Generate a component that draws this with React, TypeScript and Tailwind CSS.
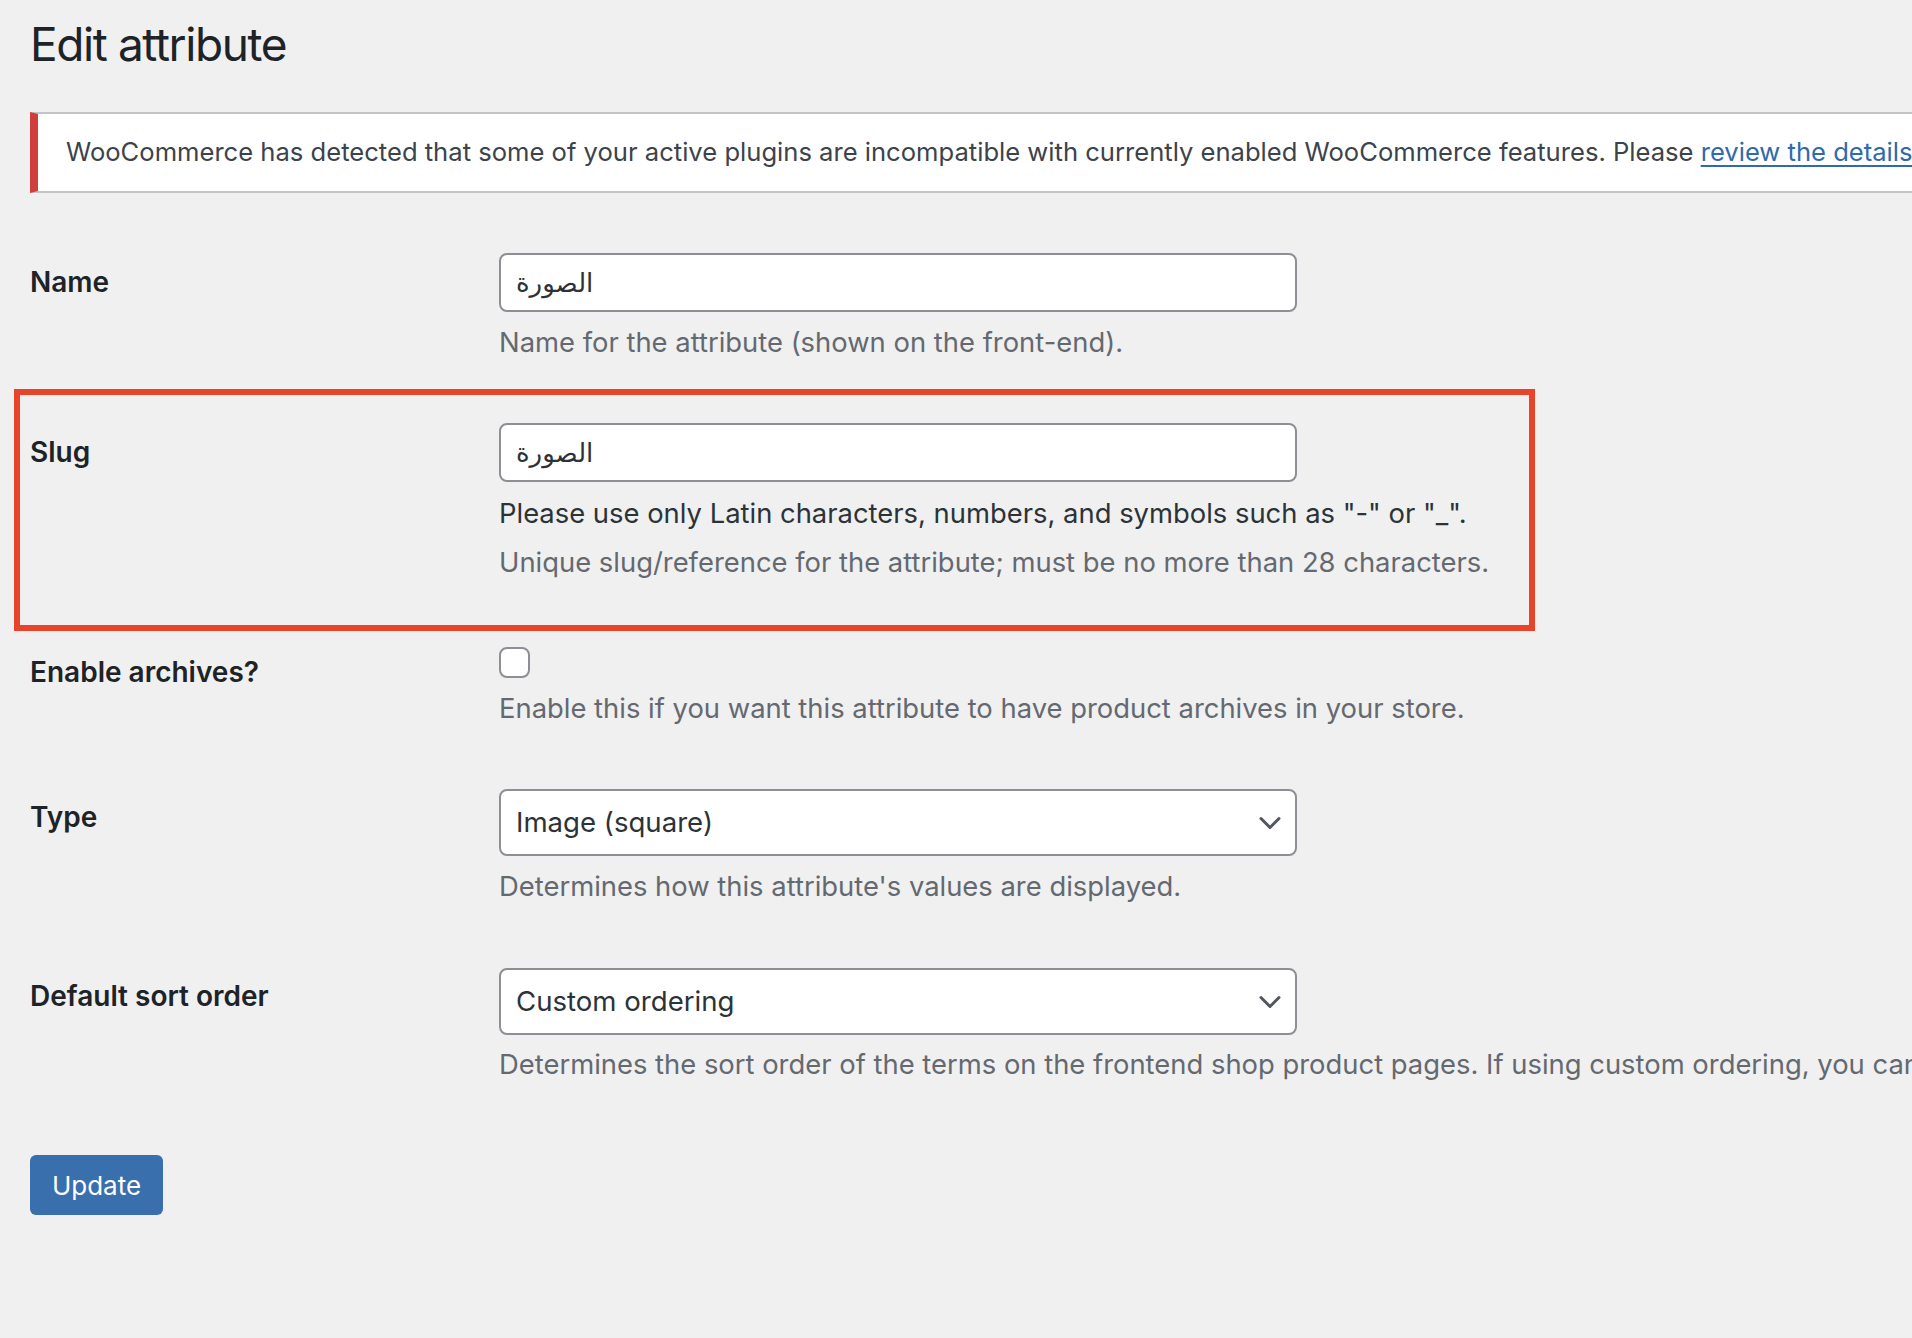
import React from 'react';

const Chevron = () => (
  <svg width="22" height="14" viewBox="0 0 22 14" fill="none">
    <path d="M2 2.5 L11 11.5 L20 2.5" stroke="#50575e" strokeWidth="3" strokeLinecap="round" strokeLinejoin="round" />
  </svg>
);

const App = () => {
  return (
    <div className="w-[1912px] h-[1338px] overflow-hidden bg-[#f0f0f1] pl-[30px] font-[family-name:Inter,'DejaVu_Sans',sans-serif] text-[#1d2327]">
      <h1 className="pt-[16px] text-[46px] leading-[56px] font-normal tracking-[-1.4px]">Edit attribute</h1>

      {/* Incompatible plugins notice */}
      <div className="mt-[40px] w-[2200px] bg-white border-2 border-l-8 border-[#c3c4c7] border-l-[#cf3f3d] pt-[20px] pb-[21px] pl-[28px]">
        <p className="text-[25.6px] leading-[36px] text-[#3c434a] whitespace-nowrap">
          WooCommerce has detected that some of your active plugins are incompatible with currently enabled WooCommerce features. Please{' '}
          <a href="#" className="text-[#2f6bab] underline underline-offset-[4px]">review the details</a>
        </p>
      </div>

      {/* Name */}
      <div className="mt-[60px] flex">
        <div className="w-[469px] shrink-0 pt-[9px] text-[28px] leading-[40px] font-semibold">Name</div>
        <div>
          <div className="w-[798px] h-[59px] bg-white border-2 border-[#8c8f94] rounded-[8px] flex items-center pl-[15px] text-[26px] text-[#2c3338]">
            الصورة
          </div>
          <p className="mt-[10px] text-[27.4px] leading-[40px] text-[#646970] whitespace-nowrap">
            Name for the attribute (shown on the front-end).
          </p>
        </div>
      </div>

      {/* Slug, highlighted */}
      <div className="mt-[27px] -ml-[16px] w-[1521px] border-[6px] border-[#e8432b] pl-[10px] pt-[28px] pb-[43px]">
        <div className="flex">
          <div className="w-[469px] shrink-0 pt-[9px] text-[28px] leading-[40px] font-semibold">Slug</div>
          <div>
            <div className="w-[798px] h-[59px] bg-white border-2 border-[#8c8f94] rounded-[8px] flex items-center pl-[15px] text-[26px] text-[#2c3338]">
              الصورة
            </div>
            <p className="mt-[11px] text-[27.4px] leading-[40px] text-[#2c3338] whitespace-nowrap">
              Please use only Latin characters, numbers, and symbols such as "-" or "_".
            </p>
            <p className="mt-[9px] text-[27.4px] leading-[40px] text-[#646970] whitespace-nowrap">
              Unique slug/reference for the attribute; must be no more than 28 characters.
            </p>
          </div>
        </div>
      </div>

      {/* Enable archives */}
      <div className="mt-[16px] flex">
        <div className="w-[469px] shrink-0 pt-[5px] text-[28px] leading-[40px] font-semibold">Enable archives?</div>
        <div>
          <div className="w-[31px] h-[31px] bg-white border-2 border-[#8c8f94] rounded-[8px]" />
          <p className="mt-[10px] text-[27.4px] leading-[40px] text-[#646970] whitespace-nowrap">
            Enable this if you want this attribute to have product archives in your store.
          </p>
        </div>
      </div>

      {/* Type */}
      <div className="mt-[61px] flex">
        <div className="w-[469px] shrink-0 pt-[8px] text-[28px] leading-[40px] font-semibold">Type</div>
        <div>
          <div className="w-[798px] h-[67px] bg-white border-2 border-[#8c8f94] rounded-[8px] flex items-center justify-between pl-[15px] pr-[14px] text-[27.6px] text-[#2c3338]">
            <span>Image (square)</span>
            <Chevron />
          </div>
          <p className="mt-[10px] text-[27.4px] leading-[40px] text-[#646970] whitespace-nowrap">
            Determines how this attribute's values are displayed.
          </p>
        </div>
      </div>

      {/* Default sort order */}
      <div className="mt-[62px] flex">
        <div className="w-[469px] shrink-0 pt-[8px] text-[28px] leading-[40px] font-semibold">Default sort order</div>
        <div>
          <div className="w-[798px] h-[67px] bg-white border-2 border-[#8c8f94] rounded-[8px] flex items-center justify-between pl-[15px] pr-[14px] text-[27.6px] text-[#2c3338]">
            <span>Custom ordering</span>
            <Chevron />
          </div>
          <p className="mt-[9px] text-[27.4px] leading-[40px] text-[#646970] whitespace-nowrap">
            Determines the sort order of the terms on the frontend shop product pages. If using custom ordering, you can drag and drop the terms in this attribute.
          </p>
        </div>
      </div>

      <button className="mt-[71px] w-[133px] h-[60px] rounded-[6px] bg-[#3a6fad] text-white text-[26px]">
        Update
      </button>
    </div>
  );
};

export default App;
